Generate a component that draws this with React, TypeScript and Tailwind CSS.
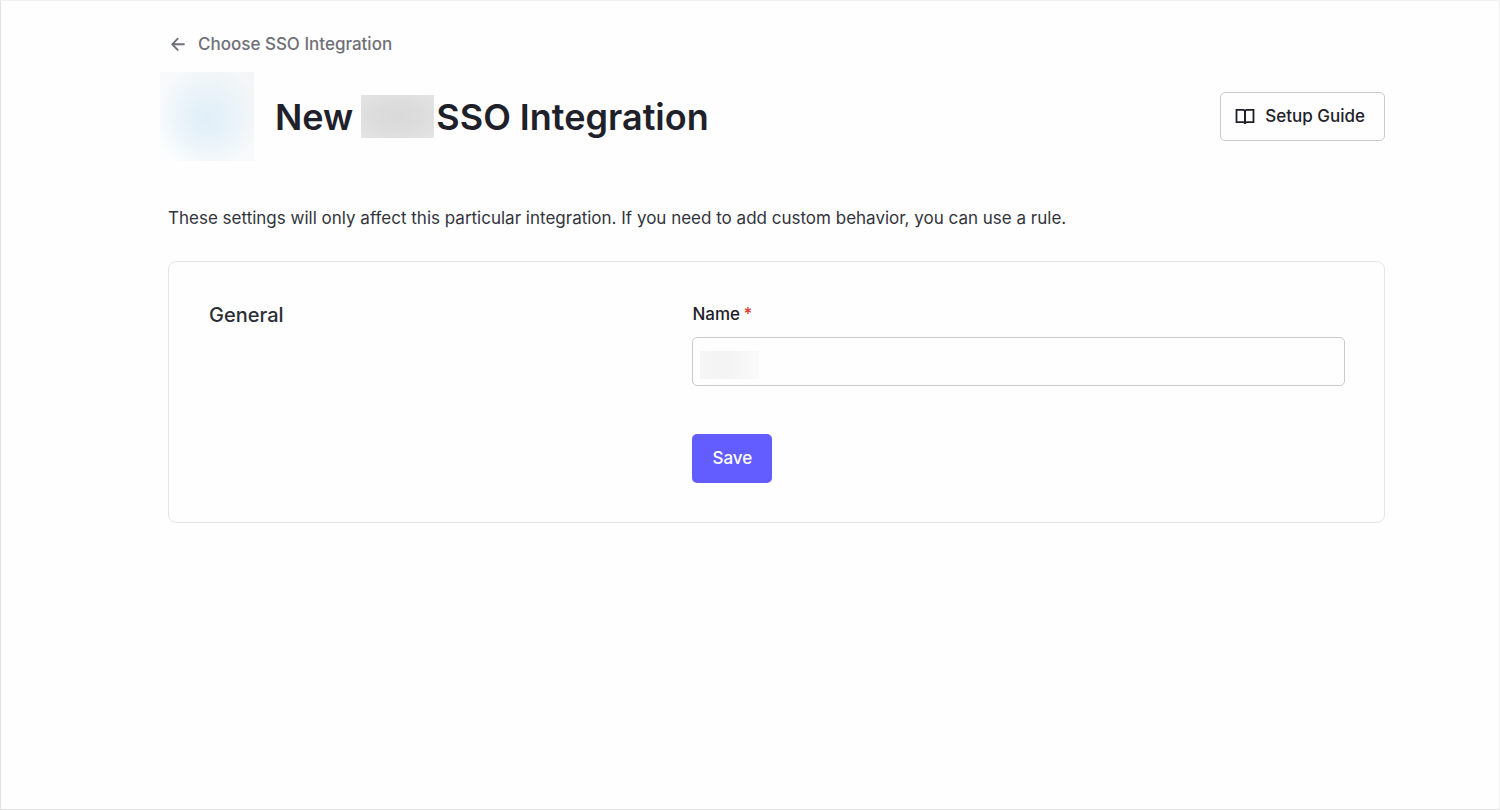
function ArrowLeftIcon() {
  return (
    <svg
      width="20"
      height="20"
      viewBox="0 0 20 20"
      fill="none"
      stroke="currentColor"
      strokeWidth="1.9"
      strokeLinecap="round"
      strokeLinejoin="round"
      aria-hidden="true"
    >
      <path d="M15.9 9.3H4.3M9.7 3.7 4.2 9.3l5.5 5.6" />
    </svg>
  );
}

function BookIcon() {
  return (
    <svg
      width="20"
      height="20"
      viewBox="0 0 20 20"
      fill="none"
      stroke="currentColor"
      strokeWidth="1.8"
      strokeLinecap="round"
      strokeLinejoin="miter"
      aria-hidden="true"
    >
      <path d="M1.5 2.8h6.4A2.1 2.1 0 0 1 10 4.9v12.2a1.9 1.9 0 0 0-1.9-1.9H1.5z" />
      <path d="M18.5 2.8h-6.4A2.1 2.1 0 0 0 10 4.9v12.2a1.9 1.9 0 0 1 1.9-1.9h6.6z" />
    </svg>
  );
}

export default function App() {
  return (
    <div className="min-h-screen border border-t-[#f0f0f0] border-r-[#f0f0f0] border-b-[#e2e2e2] border-l-[#e2e2e2] bg-[#fefefe] font-['Inter',sans-serif] text-[#1e212a]">
      <main className="mr-[114px] ml-[167px] pt-8">
        <a
          href="#integrations"
          className="flex h-6 w-fit items-center gap-[10px] text-[17px] font-medium text-[#6f7077]"
        >
          <ArrowLeftIcon />
          Choose SSO Integration
        </a>

        <header className="mt-[15px] flex items-center justify-between">
          <div className="-ml-2 flex items-center gap-[21px]">
            <div className="h-[89px] w-[94px] bg-[radial-gradient(circle_at_50%_52%,#e0eff8_0%,#e0eff8cc_25%,#e0eff800_80%),linear-gradient(to_top_right,#fdfefe,#f3f5f6)]" />
            <h1 className="flex items-center text-[36px] leading-[46px] font-semibold">
              <span>New</span>
              <span className="mr-[2px] ml-2 h-[43px] w-[73px] bg-[radial-gradient(ellipse_at_center,#d9d9da_0%,#dddddd_50%,#e4e4e4_100%)]" />
              <span>SSO Integration</span>
            </h1>
          </div>
          <button
            type="button"
            className="flex h-[49px] items-center gap-[10px] rounded-[5px] border border-[#c9cacd] pr-[19px] pl-[14px] text-[17px] font-medium"
          >
            <BookIcon />
            Setup Guide
          </button>
        </header>

        <p className="mt-[45px] text-[17px] leading-6 text-[#32343c]">
          These settings will only affect this particular integration. If you need to add custom
          behavior, you can use a rule.
        </p>

        <section className="mt-[31px] grid grid-cols-[483fr_652fr] rounded-lg border border-[#e5e5e6] pt-10 pr-[39px] pb-[39px] pl-10">
          <h2 className="pt-px text-[20px] leading-6 font-medium text-[#2c2e36]">General</h2>
          <form onSubmit={(event) => event.preventDefault()}>
            <label htmlFor="name" className="block text-[17px] leading-6 font-medium">
              Name <span className="-ml-px text-[#d93a35]">*</span>
            </label>
            <div className="relative mt-[11px]">
              <input
                id="name"
                type="text"
                required
                className="block h-[49px] w-full rounded-[5px] border border-[#c9cacd] bg-transparent px-3 text-[17px]"
              />
              <span className="pointer-events-none absolute top-[14px] left-2 h-7 w-[59px] bg-linear-to-r from-[#f5f5f5] via-[#f4f4f4] to-[#fafafa]" />
            </div>
            <button
              type="submit"
              className="mt-12 h-[49px] rounded-[5px] bg-[#635dff] px-5 text-[17px] font-medium text-white"
            >
              Save
            </button>
          </form>
        </section>
      </main>
    </div>
  );
}
